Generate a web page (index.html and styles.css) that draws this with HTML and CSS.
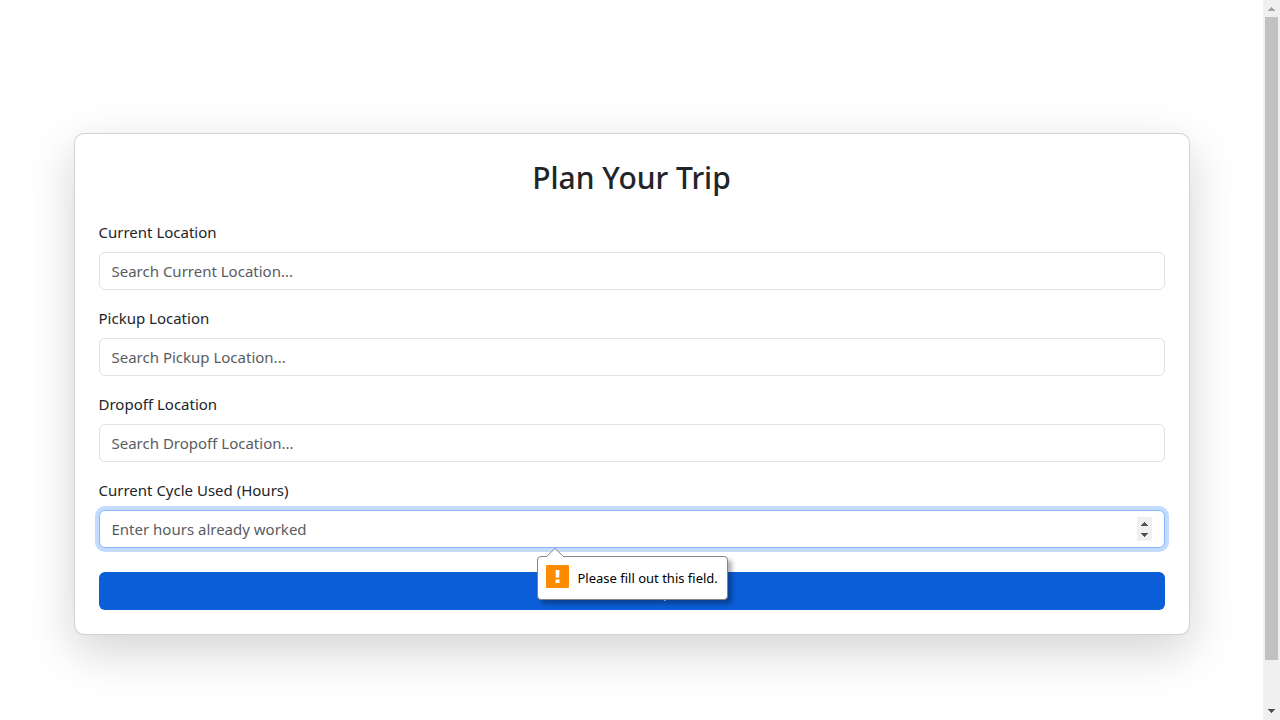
FILE: index.html
```html
<!DOCTYPE html>
<html lang="en">
<head>
<meta charset="utf-8">
<meta name="viewport" content="width=device-width, initial-scale=1">
<title>Plan Your Trip</title>
<link rel="stylesheet" href="styles.css">
</head>
<body>
<div class="app">
  <main class="page">
    <div class="card">
      <h2 class="card-title">Plan Your Trip</h2>
      <form class="trip-form">
        <div class="field">
          <label class="label" for="current">Current Location</label>
          <input class="input" id="current" type="text" placeholder="Search Current Location...">
        </div>
        <div class="field">
          <label class="label" for="pickup">Pickup Location</label>
          <input class="input" id="pickup" type="text" placeholder="Search Pickup Location...">
        </div>
        <div class="field">
          <label class="label" for="dropoff">Dropoff Location</label>
          <input class="input" id="dropoff" type="text" placeholder="Search Dropoff Location...">
        </div>
        <div class="field">
          <label class="label" for="hours">Current Cycle Used (Hours)</label>
          <div class="number">
            <input class="input input-focus" id="hours" type="number" placeholder="Enter hours already worked">
            <svg class="spinner" viewBox="0 0 15 24" aria-hidden="true"><path fill="#f0f0f0" d="M0 0h15v24H0z"/><path fill="#505050" d="M4 9h7v-1h-1v-1h-1v-1h-1v-1h-1v1h-1v1h-1v1h-1zM4 16h7v1h-1v1h-1v1h-1v1h-1v-1h-1v-1h-1v-1h-1z"/></svg>
            <div class="tooltip" role="alert">
              <svg class="tooltip-arrow" viewBox="0 0 18 9" aria-hidden="true"><path d="M0 9L9 .5 18 9" fill="#fff" stroke="#858585"/></svg>
              <svg class="tooltip-icon" viewBox="0 0 23 23" aria-hidden="true"><rect width="23" height="23" rx="1" fill="#ff8c00"/><path fill="#fff" d="M9.5 5h4l-.3 7.500h-3.400zM9.500 14.500h4v3.500h-4z"/></svg>
              <span>Please fill out this field.</span>
            </div>
          </div>
        </div>
        <button class="submit" type="submit">Submit Trip</button>
      </form>
    </div>
  </main>
  <div class="scrollbar" aria-hidden="true">
    <svg class="scroll-arrow" viewBox="0 0 17 17"><path fill="#a3a3a3" d="M5 11h7v-1h-1v-1h-1v-1h-1v-1h-1v1h-1v1h-1v1h-1z"/></svg>
    <div class="scroll-track"><div class="scroll-thumb"></div></div>
    <svg class="scroll-arrow" viewBox="0 0 17 17"><path fill="#505050" d="M5 6h7v1h-1v1h-1v1h-1v1h-1v-1h-1v-1h-1v-1h-1z"/></svg>
  </div>
</div>
</body>
</html>
```
FILE: styles.css
```css
*, *::before, *::after { box-sizing: border-box; }

body {
  margin: 0;
  background: #fff;
  color: #212529;
  font-family: "Segoe UI", "Noto Sans", sans-serif;
  font-size: 15px;
  line-height: 24px;
}

.app {
  display: flex;
  height: 100vh;
  overflow: hidden;
}

.page {
  flex: 1;
  display: flex;
  align-items: center;
  justify-content: center;
  padding: 48px 12px 0;
}

.card {
  width: 100%;
  max-width: 1116px;
  padding: 24px;
  border: 1px solid rgba(0, 0, 0, .175);
  border-radius: 10px;
  background: #fff;
  box-shadow: 0 16px 48px rgba(0, 0, 0, .175);
}

.card-title {
  margin: 0 0 22px;
  font-size: 30px;
  font-weight: 500;
  line-height: 40px;
  text-align: center;
}

.trip-form {
  display: flex;
  flex-direction: column;
  gap: 16px;
}

.field {
  display: flex;
  flex-direction: column;
  gap: 8px;
}

.input {
  display: block;
  width: 100%;
  height: 38px;
  padding: 6px 12px;
  border: 1px solid #dee2e6;
  border-radius: 6px;
  background: #fff;
  color: #212529;
  font: inherit;
  outline: 0;
  appearance: none;
}

.input::placeholder { color: #595c5f; opacity: 1; }

.input[type="number"] { appearance: textfield; }

.input-focus {
  border-color: #86b7fe;
  box-shadow: 0 0 0 4px #c2dbfe;
}

.number { position: relative; }

.spinner {
  position: absolute;
  top: 7px;
  right: 13px;
  width: 15px;
  height: 24px;
}

.tooltip {
  position: absolute;
  z-index: 1;
  top: 46px;
  left: 50%;
  display: flex;
  align-items: flex-start;
  gap: 9px;
  width: 191px;
  height: 44px;
  margin-left: -95px;
  padding: 8px;
  border: 1px solid #858585;
  border-radius: 4px;
  background: #fff;
  color: #000;
  font-size: 13px;
  line-height: 26px;
  white-space: nowrap;
  box-shadow: 4px 4px 4px rgba(0, 0, 0, .3);
}

.tooltip-arrow {
  position: absolute;
  top: -9px;
  left: 8px;
  width: 18px;
  height: 9px;
}

.tooltip-icon {
  flex: none;
  width: 23px;
  height: 23px;
}

.submit {
  height: 38px;
  margin-top: 8px;
  padding: 6px 12px;
  border: 0;
  border-radius: 6px;
  background: #0b5ed7;
  color: #fff;
  font: inherit;
}

.scrollbar {
  display: flex;
  flex-direction: column;
  width: 17px;
  background: #f0f0f0;
}

.scroll-arrow {
  flex: none;
  width: 17px;
  height: 17px;
}

.scroll-track {
  flex: 1;
  padding: 0 2px;
}

.scroll-thumb {
  height: 93.75%;
  background: #c1c1c1;
}
```
